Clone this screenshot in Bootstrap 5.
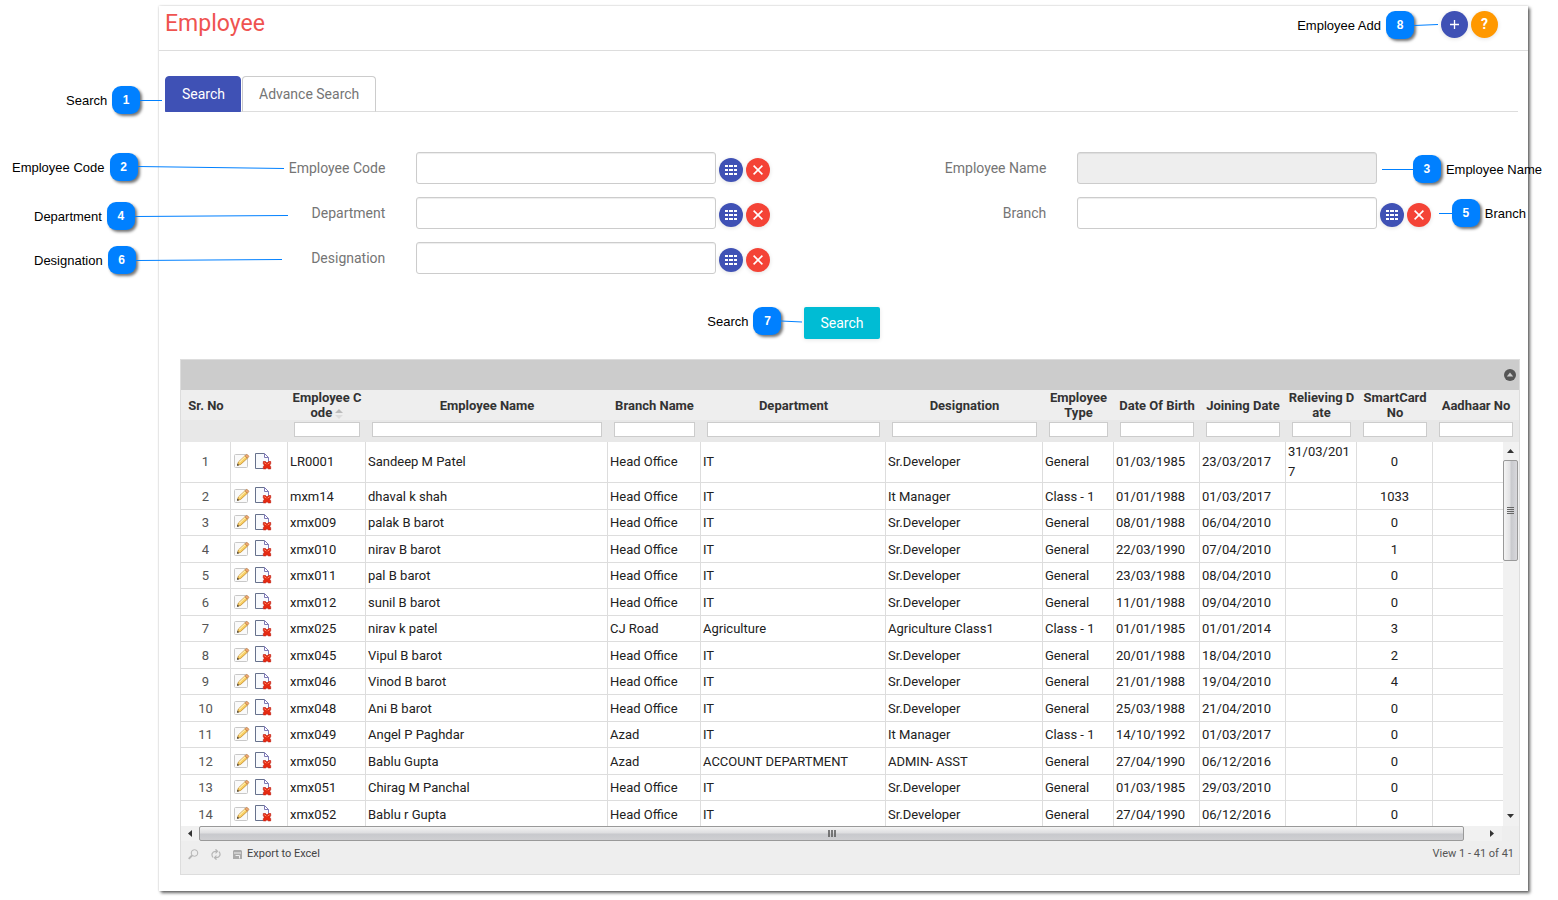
<!DOCTYPE html>
<html lang="en">
<head>
<meta charset="utf-8">
<meta name="viewport" content="width=device-width, initial-scale=1">
<title>Employee</title>
<link rel="stylesheet" href="https://cdn.jsdelivr.net/npm/bootstrap@5.3.0/dist/css/bootstrap.min.css">
<style>
  body { font-family: Roboto, "Liberation Sans", sans-serif; font-size: 13px; color: #212121; background: #fff; }
  .page { padding: 6px 30px 8px 159px; }
  .panel { background: #fff; box-shadow: 2px 2px 3px rgba(0,0,0,.6), 0 0 2px rgba(0,0,0,.2); padding-bottom: 16px; }
  .panel-top { height: 45px; padding: 0 30px 0 6px; border-bottom: 1px solid #ddd; }
  .panel-top h1 { font-size: 23px; line-height: 36px; color: #ef5350; font-weight: 400; }
  .top-actions { gap: 3px; padding-top: 5px; }
  .round-btn { border: 0; padding: 0; border-radius: 50%; color: #fff; width: 24px; height: 24px; display: inline-flex; align-items: center; justify-content: center; box-shadow: 0 1px 4px rgba(0,0,0,.12); }
  .round-btn.big { width: 27px; height: 27px; font-size: 14px; }
  .indigo { background: #3f51b5; }
  .red { background: #f44336; }
  .orange { background: #ff9800; }

  .search-tabs { margin: 25px 10px 0 6px; border-bottom: 1px solid #ddd; }
  .search-tabs .nav-link { font-size: 14px; line-height: 20px; padding: 7px 16px; color: #757575; border: 1px solid #ccc; border-bottom-color: transparent; border-radius: 4px 4px 0 0; }
  .search-tabs .nav-link.active { background: #3f51b5; border-color: #3f51b5; color: #fff; margin-right: 1px; padding-right: 15px; }

  .search-form { padding: 40px 25px 0 22px; }
  .field-row { margin-bottom: 13px; }
  .field-row label { font-size: 14px; line-height: 32px; color: #757575; padding-right: 16px; }
  .field-row .value { padding-left: 15px; gap: 3px; }
  .field-row .form-control { width: 300px; height: 32px; border: 1px solid #ccc; border-radius: 3px; padding: 4px 8px; font-size: 14px; box-shadow: inset 0 1px 1px rgba(0,0,0,.075); }
  .field-row .form-control:disabled { background: #eee; }
  .field-row .round-btn { margin-top: 4px; }
  .submit-row { margin-top: 33px; }
  .search-btn { background: #00bcd4; color: #fff; font-size: 14px; line-height: 20px; border: 0; border-radius: 2px; padding: 6px 16px; box-shadow: 0 1px 4px rgba(0,0,0,.1); }

  .grid-box { margin: 20px 8px 0 21px; border: 1px solid #ddd; background: #eee; }
  .grid-title { height: 30px; background: #ccc; padding-right: 3px; }
  .grid-title button, .grid-foot button, .act { border: 0; background: none; padding: 0; display: inline-flex; align-items: center; }
  .grid-table { table-layout: fixed; width: 100%; border-collapse: separate; border-spacing: 0; }
  .c-no { width: 50px; } .c-act { width: 57px; } .c-code { width: 78px; } .c-branch { width: 93px; }
  .c-dept { width: 185px; } .c-desig { width: 157px; } .c-type { width: 71px; } .c-date { width: 86px; }
  .c-rel { width: 71px; } .c-card { width: 76px; } .c-aad { width: 70px; } .c-aad-head { width: 86px; }
  .grid-head th { height: 30px; padding: 0 4px; text-align: center; vertical-align: middle; font-weight: 700; line-height: 15px; color: #333; word-break: break-all; }
  .grid-head th.keep { word-break: normal; padding: 0 2px; }
  .grid-head td { background: #e8e8e8; height: 22px; padding: 2px 6px 5px 6px; }
  .grid-head input { display: block; width: 100%; height: 15px; border: 1px solid #ccc; background: #fff; padding: 0 2px; font-size: 11px; }
  .grid-view { height: 384px; background: #fff; }
  .grid-scroll { overflow: hidden; min-width: 0; }
  .grid-body td { height: 26px; padding: 0 2px; border-right: 1px solid #ddd; border-bottom: 1px solid #ddd; line-height: 21px; vertical-align: middle; word-break: break-all; }
  .grid-body tr:nth-child(even) td { height: 27px; }
  .grid-body tr:first-child td { height: 41px; line-height: 20px; }
  .grid-body td:last-child { border-right: 0; }
  .grid-body td.num { text-align: center; color: #555; }
  .grid-body td.mid { text-align: center; }
  .grid-body td.acts { padding: 0 0 3px 3px; }
  .act { vertical-align: middle; margin-right: 5px; }
  .act svg { display: block; }

  .vbar { flex: none; width: 16px; background: #f1f1f1; padding: 0 1px 4px 0; }
  .vbar .arrow { height: 18px; }
  .vthumb { height: 101px; border: 1px solid #999; border-radius: 2px; background: linear-gradient(90deg, #f4f4f4, #e2e2e4 45%, #c8c9cd 55%, #d8d8dc); }
  .hbar { height: 15px; margin-right: 17px; background: #f1f1f1; }
  .hbar .arrow { width: 18px; }
  .hthumb { border: 1px solid #999; border-radius: 2px; background: linear-gradient(#f4f4f4, #dedee0 45%, #c8c9cd 55%, #cfcfd2); }
  .htrail { width: 38px; }
  .grid-foot { height: 33px; font-size: 11px; line-height: 26px; color: #555; padding: 0 5px 0 7px; }
  .grid-foot button { height: 26px; gap: 5px; color: #444; margin-right: 12px; }

  /* numbered callouts laid over the screen */
  .note { position: absolute; display: flex; align-items: center; font: 13px/28px "Liberation Sans", Arial, sans-serif; color: #000; white-space: nowrap; }
  .note b { width: 28px; height: 28px; border-radius: 9px; background: #0080ff; color: #fff; text-align: center; font-size: 12px; box-shadow: 2px 2px 3px rgba(0,0,0,.55); }
  .note span { padding: 1px 5px 0; line-height: 27px; }
  .note span:first-child { padding-left: 0; }
  .note span:last-child { padding-right: 0; }
  .note svg { stroke: #0080ff; stroke-width: 1; fill: none; }
  .n1 { left: 66px; top: 86px; } .n2 { left: 12px; top: 153px; } .n4 { left: 34px; top: 202px; } .n6 { left: 34px; top: 246px; }
  .n3 { right: 16px; top: 155px; } .n5 { right: 32px; top: 199px; } .n8 { right: 120px; top: 11px; }
  .n7 { right: 100%; top: 0; margin-right: 2px; }
</style>
</head>
<body>
<svg class="d-none" aria-hidden="true">
  <symbol id="i-grid" viewBox="0 0 12 10"><path fill="#fff" d="M0 0h3v2H0zM4 0h4v2H4zM9 0h3v2H9zM0 4h3v2H0zM4 4h4v2H4zM9 4h3v2H9zM0 8h3v2H0zM4 8h4v2H4zM9 8h3v2H9z"/></symbol>
  <symbol id="i-x" viewBox="0 0 10 10"><path stroke="#fff" stroke-width="1.6" d="M.6.6l8.8 8.8M9.4.6L.6 9.4"/></symbol>
  <symbol id="i-edit" viewBox="0 0 16 16">
    <rect x=".5" y="1.5" width="13" height="13" rx="1" fill="#fafafa" stroke="#c8c8c8"/>
    <path d="M3.500 12.300l.9-3.300L11 2.800l2.400 2.400-6.700 6.200z" fill="#f9cf62" stroke="#c08a30" stroke-width=".8"/>
    <path d="M5.200 9.300l6.300-5.900" stroke="#fff0b8" stroke-width="1.100"/>
    <path d="M11 2.800l1.200-1.100q.7-.5 1.300.1l1 1q.6.7 0 1.200l-1.100 1.200z" fill="#f0a878" stroke="#b97a38" stroke-width=".7"/>
    <path d="M3 12.800l.6-2.200 1.500 1.600z" fill="#333"/>
  </symbol>
  <symbol id="i-del" viewBox="0 0 17 17">
    <path d="M.5.5h9l4 4v11H.5z" fill="#f8fafd"/>
    <path d="M8 15.500H.5V.5h9" fill="none" stroke="#66718c"/>
    <path d="M9.500.5v4h4zM13.500 4.500v4" fill="#fff" stroke="#7d79b5"/>
    <path d="M8.300 8.500h2.200l1.500 1.500 1.500-1.500h2.200v2.200l-1 1.500 1 1.500v2.200h-2.200L12 14.800l-1.500 1.100H8.300v-2.200l1-1.500-1-1.500z" fill="#e62a12" stroke="#b8160a" stroke-width=".6"/>
    <path d="M9.300 9.700l2 1.400M14.700 9.700l-2 1.400" stroke="#ff8a66" stroke-width="1"/>
  </symbol>
</svg>

<div class="page position-relative">
  <main class="panel">
    <header class="panel-top d-flex justify-content-between">
      <h1 class="m-0">Employee</h1>
      <div class="top-actions d-flex">
        <button type="button" class="round-btn big indigo" aria-label="Add employee"><svg width="9" height="9" viewBox="0 0 9 9"><path stroke="#fff" stroke-width="1.300" d="M4.500 0v9M0 4.500h9"/></svg></button>
        <button type="button" class="round-btn big orange fw-bold" aria-label="Help">?</button>
      </div>
    </header>

    <nav class="nav nav-tabs search-tabs">
      <a class="nav-link active" href="#search">Search</a>
      <a class="nav-link" href="#advance">Advance Search</a>
    </nav>

    <form class="search-form" id="search">
      <div class="row g-0 field-row">
        <div class="col-6"><div class="row g-0">
          <label class="col-4 text-end" for="code">Employee Code</label>
          <div class="col-8 value d-flex align-items-center"><input id="code" class="form-control" type="text">
            <button type="button" class="round-btn indigo" aria-label="Pick code"><svg width="12" height="10"><use href="#i-grid"/></svg></button>
            <button type="button" class="round-btn red" aria-label="Clear code"><svg width="10" height="10"><use href="#i-x"/></svg></button></div>
        </div></div>
        <div class="col-6"><div class="row g-0">
          <label class="col-4 text-end" for="ename">Employee Name</label>
          <div class="col-8 value"><input id="ename" class="form-control" type="text" disabled></div>
        </div></div>
      </div>
      <div class="row g-0 field-row">
        <div class="col-6"><div class="row g-0">
          <label class="col-4 text-end" for="dept">Department</label>
          <div class="col-8 value d-flex align-items-center"><input id="dept" class="form-control" type="text">
            <button type="button" class="round-btn indigo" aria-label="Pick department"><svg width="12" height="10"><use href="#i-grid"/></svg></button>
            <button type="button" class="round-btn red" aria-label="Clear department"><svg width="10" height="10"><use href="#i-x"/></svg></button></div>
        </div></div>
        <div class="col-6"><div class="row g-0">
          <label class="col-4 text-end" for="branch">Branch</label>
          <div class="col-8 value d-flex align-items-center"><input id="branch" class="form-control" type="text">
            <button type="button" class="round-btn indigo" aria-label="Pick branch"><svg width="12" height="10"><use href="#i-grid"/></svg></button>
            <button type="button" class="round-btn red" aria-label="Clear branch"><svg width="10" height="10"><use href="#i-x"/></svg></button></div>
        </div></div>
      </div>
      <div class="row g-0 field-row">
        <div class="col-6"><div class="row g-0">
          <label class="col-4 text-end" for="desig">Designation</label>
          <div class="col-8 value d-flex align-items-center"><input id="desig" class="form-control" type="text">
            <button type="button" class="round-btn indigo" aria-label="Pick designation"><svg width="12" height="10"><use href="#i-grid"/></svg></button>
            <button type="button" class="round-btn red" aria-label="Clear designation"><svg width="10" height="10"><use href="#i-x"/></svg></button></div>
        </div></div>
      </div>
      <div class="submit-row d-flex justify-content-center">
        <div class="position-relative">
          <div class="note n7"><span>Search</span><b>7</b><svg width="21" height="4"><path d="M0 2l21 1"/></svg></div>
          <button type="button" class="btn search-btn d-block">Search</button>
        </div>
      </div>
    </form>

    <section class="grid-box">
      <div class="grid-title d-flex justify-content-end align-items-center">
        <button type="button" aria-label="Collapse"><svg width="12" height="12" viewBox="0 0 12 12"><circle cx="6" cy="6" r="6" fill="#555"/><path d="M6 3.500L9.200 7.500H2.800z" fill="#ccc"/></svg></button>
      </div>
      <table class="grid-table grid-head">
        <colgroup><col class="c-no"><col class="c-act"><col class="c-code"><col><col class="c-branch"><col class="c-dept"><col class="c-desig"><col class="c-type"><col class="c-date"><col class="c-date"><col class="c-rel"><col class="c-card"><col class="c-aad-head"></colgroup>
        <thead>
          <tr><th>Sr. No</th><th></th><th>Employee Code <svg width="8" height="10" viewBox="0 0 8 10"><path d="M4 0l4 4H0z" fill="#bbb"/><path d="M4 10L0 6h8z" fill="#ddd"/></svg></th><th>Employee Name</th><th class="keep">Branch Name</th><th>Department</th><th>Designation</th><th class="keep">Employee Type</th><th class="keep">Date Of Birth</th><th class="keep">Joining Date</th><th class="px-0">Relieving Date</th><th class="keep">SmartCard No</th><th class="keep">Aadhaar No</th></tr>
          <tr><td></td><td></td><td><input type="text" aria-label="Filter code"></td><td><input type="text" aria-label="Filter name"></td><td><input type="text" aria-label="Filter branch"></td><td><input type="text" aria-label="Filter department"></td><td><input type="text" aria-label="Filter designation"></td><td><input type="text" aria-label="Filter type"></td><td><input type="text" aria-label="Filter birth date"></td><td><input type="text" aria-label="Filter joining date"></td><td><input type="text" aria-label="Filter relieving date"></td><td><input type="text" aria-label="Filter card"></td><td><input type="text" aria-label="Filter Aadhaar"></td></tr>
        </thead>
      </table>
      <div class="grid-view d-flex">
        <div class="grid-scroll flex-grow-1">
          <table class="grid-table grid-body">
            <colgroup><col class="c-no"><col class="c-act"><col class="c-code"><col><col class="c-branch"><col class="c-dept"><col class="c-desig"><col class="c-type"><col class="c-date"><col class="c-date"><col class="c-rel"><col class="c-card"><col class="c-aad"></colgroup>
            <tbody id="rows"></tbody>
          </table>
        </div>
        <div class="vbar d-flex flex-column">
          <div class="arrow d-flex align-items-center justify-content-center"><svg width="7" height="4"><path d="M3.500 0L7 4H0z" fill="#333"/></svg></div>
          <div class="vthumb d-flex align-items-center justify-content-center"><svg width="7" height="8"><path d="M0 .5h7M0 2.500h7M0 4.500h7M0 6.500h7" stroke="#666"/></svg></div>
          <div class="arrow d-flex align-items-end justify-content-center mt-auto"><svg class="mb-1" width="7" height="4"><path d="M3.500 4L0 0h7z" fill="#333"/></svg></div>
        </div>
      </div>
      <div class="hbar d-flex">
        <div class="arrow d-flex align-items-center justify-content-center"><svg width="4" height="7"><path d="M0 3.500L4 0v7z" fill="#333"/></svg></div>
        <div class="hthumb flex-grow-1 d-flex align-items-center justify-content-center"><svg width="8" height="7"><path d="M1 0v7M4 0v7M7 0v7" stroke="#555" stroke-width="1.500"/></svg></div>
        <div class="htrail d-flex align-items-center justify-content-end pe-2"><svg width="4" height="7"><path d="M4 3.500L0 0v7z" fill="#333"/></svg></div>
      </div>
      <footer class="grid-foot d-flex justify-content-between">
        <div class="d-flex">
          <button type="button" aria-label="Find"><svg width="11" height="11" viewBox="0 0 11 11" fill="none" stroke="#b5b5b5"><circle cx="6.500" cy="4" r="3.300"/><path stroke-width="1.800" d="M4 6.500L.7 9.800"/></svg></button>
          <button type="button" aria-label="Reload"><svg width="10" height="11" viewBox="0 0 10 11" fill="none" stroke="#b5b5b5" stroke-width="1.200"><path d="M2 8.500C0 6 1 2.500 4.500 2.300H6M4.500.3l2 2-2 2M8 2.700c2 2.300 1 5.800-2.500 6H4M5.500 6.700l-2 2 2 2"/></svg></button>
          <button type="button"><svg width="9" height="9" viewBox="0 0 9 9"><path d="M0 1l1-1h7l1 1v8H0z" fill="#aaa"/><path d="M1 3h7M2.500 5.500h4v3" stroke="#eee" fill="none"/></svg>Export to Excel</button>
        </div>
        <span>View 1 - 41 of 41</span>
      </footer>
    </section>
  </main>

  <div class="note n1"><span>Search</span><b>1</b><svg width="22" height="4"><path d="M0 2.500h22"/></svg></div>
  <div class="note n2"><span>Employee Code</span><b>2</b><svg width="146" height="4"><path d="M0 1.500l146 2"/></svg></div>
  <div class="note n4"><span>Department</span><b>4</b><svg width="153" height="4"><path d="M0 2.500l153-1"/></svg></div>
  <div class="note n6"><span>Designation</span><b>6</b><svg width="146" height="4"><path d="M0 2.500l146-1"/></svg></div>
  <div class="note n8"><span>Employee Add</span><b>8</b><svg width="24" height="4"><path d="M0 2.500l24-1"/></svg></div>
  <div class="note n3"><svg width="31" height="4"><path d="M0 2.500h31"/></svg><b>3</b><span>Employee Name</span></div>
  <div class="note n5"><svg width="13" height="4"><path d="M0 2.500h13"/></svg><b>5</b><span>Branch</span></div>
</div>

<script src="https://cdn.jsdelivr.net/npm/bootstrap@5.3.0/dist/js/bootstrap.bundle.min.js"></script>
<script>
  // code, name, branch, department, designation, type, born, joined, relieved, card
  const employees = [
    ["LR0001","Sandeep M Patel","Head Office","IT","Sr.Developer","General","01/03/1985","23/03/2017","31/03/2017","0"],
    ["mxm14","dhaval k shah","Head Office","IT","It Manager","Class - 1","01/01/1988","01/03/2017","","1033"],
    ["xmx009","palak B barot","Head Office","IT","Sr.Developer","General","08/01/1988","06/04/2010","","0"],
    ["xmx010","nirav B barot","Head Office","IT","Sr.Developer","General","22/03/1990","07/04/2010","","1"],
    ["xmx011","pal B barot","Head Office","IT","Sr.Developer","General","23/03/1988","08/04/2010","","0"],
    ["xmx012","sunil B barot","Head Office","IT","Sr.Developer","General","11/01/1988","09/04/2010","","0"],
    ["xmx025","nirav k patel","CJ Road","Agriculture","Agriculture Class1","Class - 1","01/01/1985","01/01/2014","","3"],
    ["xmx045","Vipul B barot","Head Office","IT","Sr.Developer","General","20/01/1988","18/04/2010","","2"],
    ["xmx046","Vinod B barot","Head Office","IT","Sr.Developer","General","21/01/1988","19/04/2010","","4"],
    ["xmx048","Ani B barot","Head Office","IT","Sr.Developer","General","25/03/1988","21/04/2010","","0"],
    ["xmx049","Angel P Paghdar","Azad","IT","It Manager","Class - 1","14/10/1992","01/03/2017","","0"],
    ["xmx050","Bablu Gupta","Azad","ACCOUNT DEPARTMENT","ADMIN- ASST","General","27/04/1990","06/12/2016","","0"],
    ["xmx051","Chirag M Panchal","Head Office","IT","Sr.Developer","General","01/03/1985","29/03/2010","","0"],
    ["xmx052","Bablu r Gupta","Head Office","IT","Sr.Developer","General","27/04/1990","06/12/2016","","0"]
  ];
  document.getElementById("rows").innerHTML = employees.map((e, i) =>
    `<tr><td class="num">${i + 1}</td><td class="acts"><button type="button" class="act" aria-label="Edit"><svg width="16" height="16"><use href="#i-edit"/></svg></button><button type="button" class="act" aria-label="Delete"><svg width="17" height="17"><use href="#i-del"/></svg></button></td>` +
    e.map((v, c) => `<td${c === 9 ? ' class="mid"' : ""}>${v}</td>`).join("") + "<td></td></tr>").join("");
</script>
</body>
</html>
